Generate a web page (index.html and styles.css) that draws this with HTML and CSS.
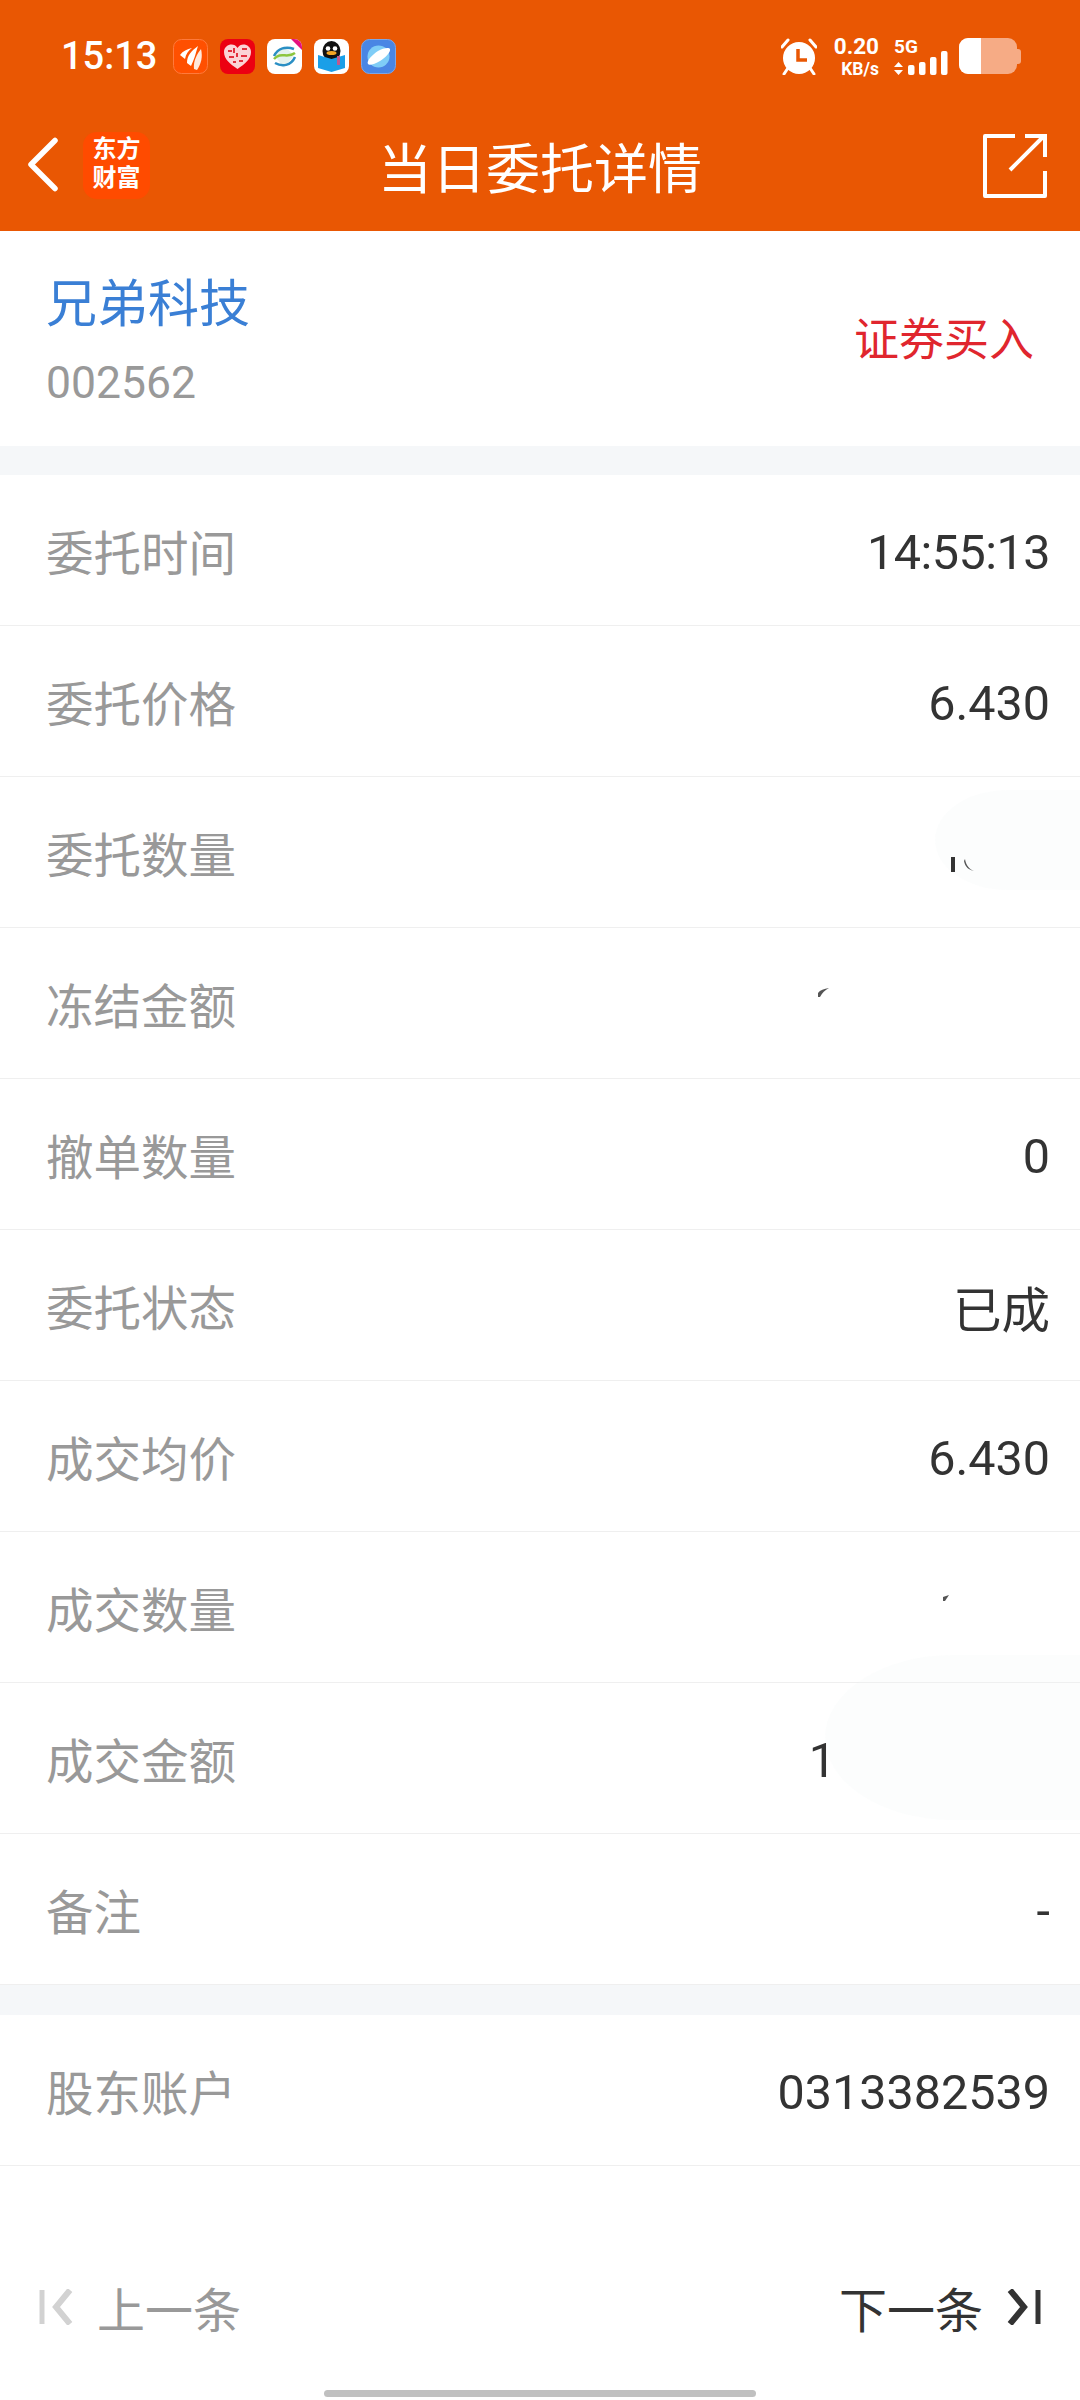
FILE: index.html
```html
<!DOCTYPE html>
<html>

<head>
    <meta charset='UTF-8'>
    <title>当日委托详情</title>
    <link rel="stylesheet" href="styles.css">
</head>

<body>
    <div class='top'>
        <!-- Status bar -->
        <div class='status-bar'>
            <span class='clock'>15:13</span>
            <div class='app-icons'>
                <svg class='app-icon' viewBox='0 0 35 35'>
                    <rect x='0.5' y='0.5' width='34' height='34' rx='8' fill='#ff5000' stroke='#ff7a3c'/>
                    <path d='M7 16 C10 12 14 10 19 9 C15 12 13 15 12 20 Z' fill='#fff'/>
                    <path d='M14 24 C14 17 18 12 25 7 C23 13 22 19 18 27 Z' fill='#fff'/>
                    <path d='M21 30 C20 22 24 15 28 10 C30 18 28 25 24 31 Z' fill='#ffe9dd'/>
                </svg>
                <svg class='app-icon' viewBox='0 0 35 35'>
                    <rect width='35' height='35' rx='8' fill='#ec0012'/>
                    <path d='M17.5 30 C10 25 4 20 4 13 C4 8 8 5.500 11.500 5.500 C14 5.500 16 6.500 17.500 9 C19 6.500 21 5.500 23.500 5.500 C27 5.500 31 8 31 13 C31 20 25 25 17.500 30 Z' fill='#fbd3d6'/>
                    <path d='M8 12h4M14 9v5M22 10h5M9 18h5M21 17h6M13 23h3M19 22h4M17 14v4' stroke='#e2303e' stroke-width='2'/>
                </svg>
                <svg class='app-icon' viewBox='0 0 35 35'>
                    <rect width='35' height='35' rx='8' fill='#fff'/>
                    <path d='M7 16 L17 7 L27 16 L17 29 Z' fill='#e4f2ee'/>
                    <path d='M7 17 C11 9 19 7 27 10' fill='none' stroke='#2a8fc4' stroke-width='2.500'/>
                    <path d='M7 20 C14 12 20 20 28 14' fill='none' stroke='#8cc63f' stroke-width='2.500'/>
                    <path d='M8 24 C15 28 24 27 28 18' fill='none' stroke='#2a8fc4' stroke-width='2.500'/>
                    <path d='M24 0h3a8 8 0 0 1 8 8v3z' fill='#e5127f'/>
                </svg>
                <svg class='app-icon' viewBox='0 0 35 35'>
                    <rect width='35' height='35' rx='8' fill='#fff'/>
                    <ellipse cx='17.500' cy='12' rx='9' ry='10' fill='#111'/>
                    <circle cx='14' cy='9.500' r='2.300' fill='#fff'/>
                    <circle cx='21' cy='9.500' r='2.300' fill='#fff'/>
                    <ellipse cx='17.500' cy='14' rx='5' ry='2' fill='#f5a623'/>
                    <path d='M4 16 L17.500 20 L31 16 V29 L17.500 33 L4 29 Z' fill='#1a9fe8'/>
                    <rect x='23' y='17' width='3' height='9' fill='#c2598e'/>
                </svg>
                <svg class='app-icon' viewBox='0 0 35 35'>
                    <rect x='0.500' y='0.500' width='34' height='34' rx='8' fill='#4a86e4' stroke='#7ea6e6'/>
                    <circle cx='17.500' cy='17.500' r='11' fill='#7fcdf7'/>
                    <path d='M7 25 C5 22 12 15 17 12 C22 9 28 8 29 10 C30 13 24 19 19 22 C14 25 8 27 7 25 Z' fill='#fff'/>
                </svg>
            </div>
            <div class='status-right'>
                <svg class='alarm' viewBox='0 0 36 38'>
                    <path d='M1 10 L7 3 M35 10 L29 3 M7 31 L3 37 M29 31 L33 37' stroke='#fff' stroke-width='3' stroke-linecap='round'/>
                    <circle cx='18' cy='21' r='16' fill='#fff'/>
                    <path d='M17 12 V23 H26' fill='none' stroke='#e95703' stroke-width='3.500'/>
                </svg>
                <div class='speed'>
                    <span class='speed-value'>0.20</span>
                    <span class='speed-unit'>KB/s</span>
                </div>
                <div class='signal'>
                    <span class='net-type'>5G</span>
                    <svg class='bars' viewBox='0 0 54 24'>
                        <path d='M0 16 L4.500 11 L9 16 Z M0 19 L4.500 24 L9 19 Z' fill='#fff'/>
                        <rect x='14' y='14' width='6.500' height='10' rx='2' fill='#fff'/>
                        <rect x='25' y='11' width='6.500' height='13' rx='2' fill='#fff'/>
                        <rect x='36' y='6' width='6.500' height='18' rx='2' fill='#fff'/>
                        <rect x='47' y='0' width='6.500' height='24' rx='2' fill='#fff'/>
                    </svg>
                </div>
                <div class='battery'>
                    <div class='battery-level'></div>
                </div>
            </div>
        </div>

        <!-- Nav bar -->
        <div class='nav-bar'>
            <svg class='back-icon' viewBox='0 0 32 58'>
                <path d='M28 3.500 L4 27.500 L28 51.500' fill='none' stroke='#fff' stroke-width='5.500' stroke-linecap='round' stroke-linejoin='round'/>
            </svg>
            <div class='logo'>东方<br>财富</div>
            <h1 class='nav-title'>当日委托详情</h1>
            <svg class='share-icon' viewBox='0 0 64 66'>
                <path d='M32 3 H2 V63 H62 V38' fill='none' stroke='#fff' stroke-width='4' stroke-linejoin='round'/>
                <path d='M27 37 L61 3 M42 3 H62 V24' fill='none' stroke='#fff' stroke-width='4'/>
            </svg>
        </div>
    </div>

    <!-- Stock -->
    <div class='stock'>
        <div>
            <div class='stock-name'>兄弟科技</div>
            <div class='stock-code'>002562</div>
        </div>
        <div class='trade-type'>证券买入</div>
    </div>

    <div class='section'>
        <div class='row'><span class='label'>委托时间</span><span class='value value-time'>14:55:13</span></div>
        <div class='row'><span class='label'>委托价格</span><span class='value'>6.430</span></div>
        <div class='row'>
            <span class='label'>委托数量</span>
            <svg class='scrap scrap-qty' viewBox='0 0 24 50'>
                <rect x='0' y='30' width='4' height='15' fill='#333'/>
                <path d='M14 32 C15 38 18 42 23 44 C18 43 14 40 13 34 Z' fill='#555'/>
            </svg>
        </div>
        <div class='row'>
            <span class='label'>冻结金额</span>
            <svg class='scrap scrap-frozen' viewBox='0 0 12 50'>
                <path d='M0 15 C2 12 6 11 11 10 C7 12 4 15 2 19 H0 Z' fill='#555'/>
            </svg>
        </div>
        <div class='row'><span class='label'>撤单数量</span><span class='value'>0</span></div>
        <div class='row'><span class='label'>委托状态</span><span class='value'>已成</span></div>
        <div class='row'><span class='label'>成交均价</span><span class='value'>6.430</span></div>
        <div class='row'>
            <span class='label'>成交数量</span>
            <svg class='scrap scrap-done' viewBox='0 0 8 50'>
                <path d='M0 15 L6 13 L2 19 H0 Z' fill='#555'/>
            </svg>
        </div>
        <div class='row'><span class='label'>成交金额</span><span class='value value-cut'>1</span></div>
        <div class='row'><span class='label'>备注</span><span class='value'>-</span></div>
    </div>

    <div class='section section-last'>
        <div class='row'><span class='label'>股东账户</span><span class='value'>0313382539</span></div>
    </div>

    <!-- Prev / next -->
    <div class='pager'>
        <div class='pager-item prev'>
            <svg class='pager-icon' viewBox='0 0 34 36'>
                <path d='M3 1 V35' stroke='#d2d2d2' stroke-width='5'/>
                <path d='M31 1 L17 18 L31 35' fill='none' stroke='#d2d2d2' stroke-width='6'/>
            </svg>
            <span>上一条</span>
        </div>
        <div class='pager-item next'>
            <span>下一条</span>
            <svg class='pager-icon' viewBox='0 0 34 36'>
                <path d='M3 1 L17 18 L3 35' fill='none' stroke='#333' stroke-width='6'/>
                <path d='M31 1 V35' stroke='#333' stroke-width='5'/>
            </svg>
        </div>
    </div>
    <div class='home-bar'></div>

    <!-- Retouched patches over the hidden amounts -->
    <div class='patch patch-upper'></div>
    <div class='patch patch-lower'></div>
</body>

</html>
```

FILE: styles.css
```css
body {
    font-family: Roboto, "Noto Sans CJK SC", sans-serif;
    margin: 0;
    width: 1080px;
    height: 2400px;
    overflow: hidden;
    position: relative;
    background-color: #ffffff;
    display: flex;
    flex-direction: column;
    color: #333333;
}

.top {
    background-color: #e95703;
    height: 231px;
    color: white;
}

.status-bar {
    display: flex;
    align-items: center;
    height: 112px;
    padding: 0 63px 0 61px;
}

.clock {
    font-size: 38px;
    font-weight: 500;
    width: 112px;
}

.app-icons {
    display: flex;
    gap: 12px;
}

.app-icon {
    width: 35px;
    height: 35px;
}

.status-right {
    display: flex;
    align-items: center;
    margin-left: auto;
}

.alarm {
    width: 36px;
    height: 38px;
}

.speed {
    display: flex;
    flex-direction: column;
    align-items: flex-end;
    gap: 4.500px;
    width: 46px;
    margin-left: 16px;
    padding-top: 2px;
    font-weight: 700;
}

.speed-value {
    font-size: 22.500px;
    line-height: 20px;
}

.speed-unit {
    font-size: 17.500px;
    line-height: 18px;
}

.signal {
    display: flex;
    flex-direction: column;
    margin-left: 15px;
    padding-top: 3px;
    width: 54px;
}

.net-type {
    font-size: 19px;
    font-weight: 700;
    line-height: 13px;
}

.bars {
    width: 54px;
    height: 24px;
    margin-top: -2px;
}

.battery {
    width: 58px;
    height: 36px;
    margin-left: 11px;
    border-radius: 9px;
    background-color: #f6ab85;
    position: relative;
}

.battery::after {
    content: '';
    position: absolute;
    right: -4px;
    top: 11px;
    width: 4px;
    height: 15px;
    border-radius: 0 3px 3px 0;
    background-color: #f6ab85;
}

.battery-level {
    width: 22px;
    height: 100%;
    background-color: white;
    border-radius: 9px 0 0 9px;
}

.nav-bar {
    height: 107px;
    display: flex;
    align-items: center;
    padding: 0 33px 12px 27px;
}

.back-icon {
    flex: none;
    width: 32px;
    height: 58px;
}

.logo {
    flex: none;
    width: 67px;
    height: 67px;
    margin-left: 24px;
    border-radius: 14px;
    background-color: #ff4b00;
    font-size: 24px;
    font-weight: 700;
    line-height: 29px;
    text-align: center;
    padding-top: 3px;
    box-sizing: border-box;
}

.nav-title {
    margin: 0;
    flex: 1;
    padding-right: 53px;
    text-align: center;
    font-size: 54px;
    font-weight: 400;
}

.share-icon {
    flex: none;
    width: 64px;
    height: 66px;
}

.stock {
    height: 215px;
    display: flex;
    justify-content: space-between;
    align-items: center;
    padding: 0 46px;
    border-bottom: 29px solid #f5f7f9;
}

.stock-name {
    font-size: 51px;
    line-height: 70px;
    margin-top: 6px;
    color: #3a7fd5;
}

.stock-code {
    font-size: 44.500px;
    line-height: 60px;
    margin-top: 13px;
    color: #999999;
}

.trade-type {
    font-size: 45px;
    color: #e0262e;
    margin-top: -4px;
}

.section {
    border-bottom: 30px solid #f5f7f9;
}

.section-last {
    border-bottom: none;
}

.row {
    height: 151px;
    box-sizing: border-box;
    display: flex;
    justify-content: space-between;
    align-items: center;
    padding: 0 30px 0 46px;
    border-bottom: 1px solid #efefef;
}

.label {
    font-size: 47.500px;
    color: #999999;
}

.value {
    font-size: 48.500px;
    padding-top: 4px;
    color: #333333;
}

.value-time {
    letter-spacing: -0.5px;
}

.value-cut {
    margin-right: 214px;
    position: relative;
    z-index: 1;
}

.scrap {
    height: 50px;
    display: block;
    position: relative;
    z-index: 1;
}

.scrap-qty {
    width: 24px;
    margin-right: 75px;
}

.scrap-frozen {
    width: 12px;
    margin-right: 220px;
}

.scrap-done {
    width: 8px;
    margin-right: 99px;
}

.pager {
    display: flex;
    justify-content: space-between;
    margin-top: auto;
    padding: 0 39px 48px;
}

.pager-item {
    display: flex;
    align-items: center;
    gap: 24px;
    font-size: 48px;
}

.prev {
    color: #999999;
}

.pager-icon {
    width: 34px;
    height: 36px;
}

.home-bar {
    width: 432px;
    height: 7px;
    margin: 0 auto 3px;
    border-radius: 4px;
    background-color: #c0c0c0;
}

.patch {
    position: absolute;
    background-color: rgba(240, 246, 246, 0.18);
    border-radius: 50% 0 0 50%;
    pointer-events: none;
}

.patch-upper {
    left: 935px;
    top: 790px;
    width: 145px;
    height: 100px;
}

.patch-lower {
    left: 825px;
    top: 1655px;
    width: 255px;
    height: 165px;
}
```
